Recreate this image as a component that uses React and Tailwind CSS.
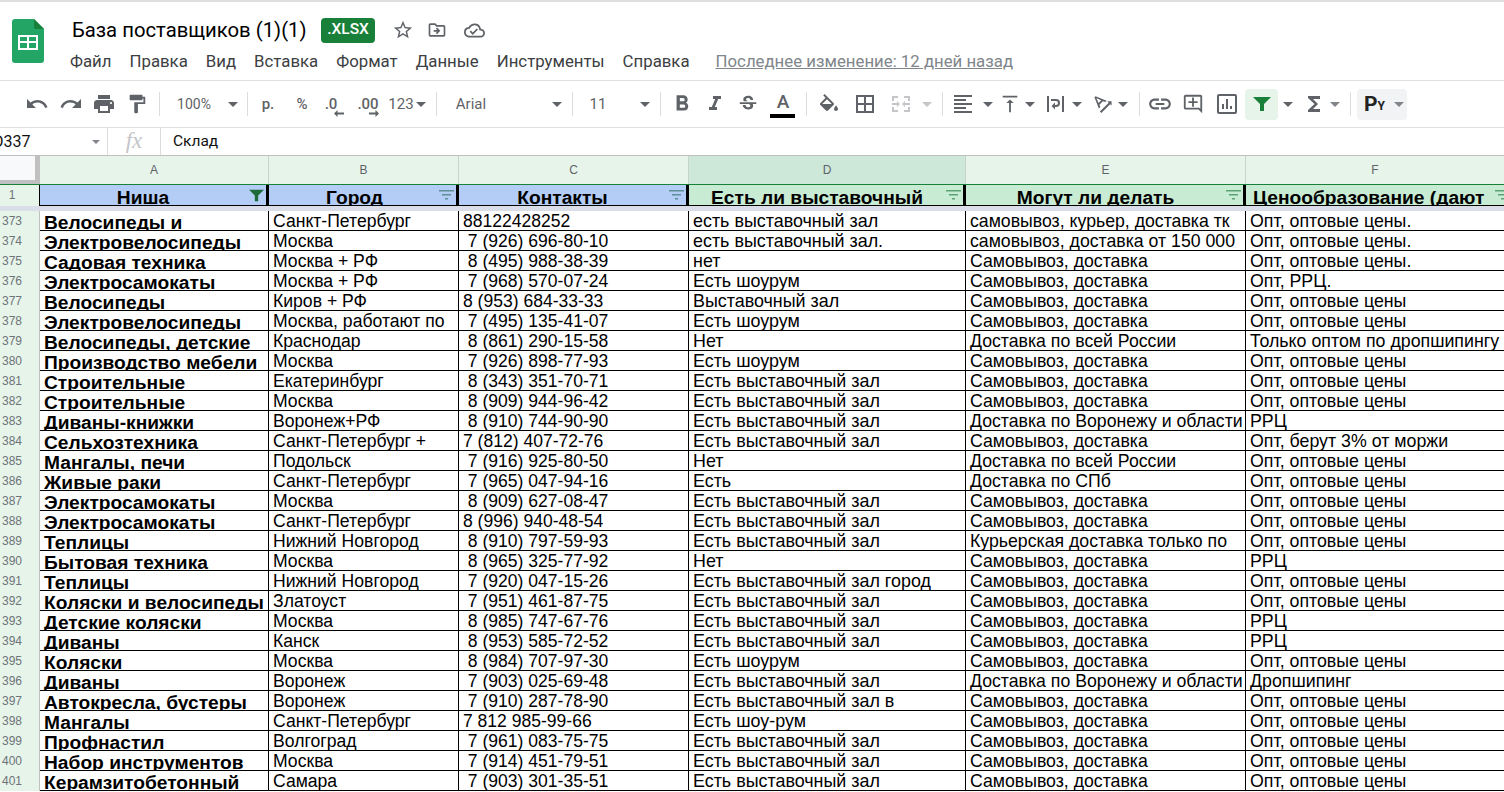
import React from 'react';
import {
  MdUndo,
  MdRedo,
  MdPrint,
  MdFormatPaint,
  MdFormatBold,
  MdFormatItalic,
  MdStrikethroughS,
  MdBorderAll,
  MdFormatAlignLeft,
  MdVerticalAlignTop,
  MdTextRotationAngleup,
  MdLink,
  MdOutlineAddComment,
  MdFunctions,
  MdStarBorder,
  MdOutlineDriveFileMove,
  MdOutlineCloudDone,
} from 'react-icons/md';

const menus = ['Файл', 'Правка', 'Вид', 'Вставка', 'Формат', 'Данные', 'Инструменты', 'Справка'];

const columns = [
  { letter: 'A', width: 'w-[229px]', title: 'Ниша', head: 'bg-[#b3cdf6]', align: 'justify-center pr-[20px]', active: true },
  { letter: 'B', width: 'w-[190px]', title: 'Город', head: 'bg-[#b3cdf6]', align: 'justify-center pr-[16px]', text: 'text-[17.600px] border-r' },
  { letter: 'C', width: 'w-[230px]', title: 'Контакты', head: 'bg-[#b3cdf6]', align: 'justify-center pr-[20px]', text: 'text-[17.550px] border-r' },
  { letter: 'D', width: 'w-[277px]', title: 'Есть ли выставочный', head: 'bg-[#c8ebd3]', align: 'justify-center pr-[18px]', selected: true, text: 'text-[17.900px] border-r' },
  { letter: 'E', width: 'w-[280px]', title: 'Могут ли делать', head: 'bg-[#c8ebd3]', align: 'justify-center pr-[18px]', text: 'text-[17.700px] border-r' },
  { letter: 'F', width: 'w-[258px]', title: 'Ценообразование (дают', head: 'bg-[#c8ebd3]', align: 'justify-start pl-[7px]', text: 'text-[17.800px]' },
];

const opt = 'Опт, оптовые цены';
const sd = 'Самовывоз, доставка';
const ez = 'Есть выставочный зал';

const rows = [
  [373, 'Велосипеды и', 'Санкт-Петербург', '88122428252', 'есть выставочный зал', 'самовывоз, курьер, доставка тк', 'Опт, оптовые цены.'],
  [374, 'Электровелосипеды', 'Москва', ' 7 (926) 696-80-10', 'есть выставочный зал.', 'самовывоз, доставка от 150 000', 'Опт, оптовые цены.'],
  [375, 'Садовая техника', 'Москва + РФ', ' 8 (495) 988-38-39', 'нет', sd, 'Опт, оптовые цены.'],
  [376, 'Электросамокаты', 'Москва + РФ', ' 7 (968) 570-07-24', 'Есть шоурум', sd, 'Опт, РРЦ.'],
  [377, 'Велосипеды', 'Киров + РФ', '8 (953) 684-33-33', 'Выставочный зал', sd, opt],
  [378, 'Электровелосипеды', 'Москва, работают по', ' 7 (495) 135-41-07', 'Есть шоурум', sd, opt],
  [379, 'Велосипеды, детские', 'Краснодар', ' 8 (861) 290-15-58', 'Нет', 'Доставка по всей России', 'Только оптом по дропшипингу'],
  [380, 'Производство мебели', 'Москва', ' 7 (926) 898-77-93', 'Есть шоурум', sd, opt],
  [381, 'Строительные', 'Екатеринбург', ' 8 (343) 351-70-71', ez, sd, opt],
  [382, 'Строительные', 'Москва', ' 8 (909) 944-96-42', ez, sd, opt],
  [383, 'Диваны-книжки', 'Воронеж+РФ', ' 8 (910) 744-90-90', ez, 'Доставка по Воронежу и области', 'РРЦ'],
  [384, 'Сельхозтехника', 'Санкт-Петербург +', '7 (812) 407-72-76', ez, sd, 'Опт, берут 3% от моржи'],
  [385, 'Мангалы, печи', 'Подольск', ' 7 (916) 925-80-50', 'Нет', 'Доставка по всей России', opt],
  [386, 'Живые раки', 'Санкт-Петербург', ' 7 (965) 047-94-16', 'Есть', 'Доставка по СПб', opt],
  [387, 'Электросамокаты', 'Москва', ' 8 (909) 627-08-47', ez, sd, opt],
  [388, 'Электросамокаты', 'Санкт-Петербург', '8 (996) 940-48-54', ez, sd, opt],
  [389, 'Теплицы', 'Нижний Новгород', ' 8 (910) 797-59-93', ez, 'Курьерская доставка только по', opt],
  [390, 'Бытовая техника', 'Москва', ' 8 (965) 325-77-92', 'Нет', sd, 'РРЦ'],
  [391, 'Теплицы', 'Нижний Новгород', ' 7 (920) 047-15-26', 'Есть выставочный зал город', sd, opt],
  [392, 'Коляски и велосипеды', 'Златоуст', ' 7 (951) 461-87-75', ez, sd, opt],
  [393, 'Детские коляски', 'Москва', ' 8 (985) 747-67-76', ez, sd, 'РРЦ'],
  [394, 'Диваны', 'Канск', ' 8 (953) 585-72-52', ez, sd, 'РРЦ'],
  [395, 'Коляски', 'Москва', ' 8 (984) 707-97-30', 'Есть шоурум', sd, opt],
  [396, 'Диваны', 'Воронеж', ' 7 (903) 025-69-48', ez, 'Доставка по Воронежу и области', 'Дропшипинг'],
  [397, 'Автокресла, бустеры', 'Воронеж', ' 7 (910) 287-78-90', 'Есть выставочный зал в', sd, opt],
  [398, 'Мангалы', 'Санкт-Петербург', '7 812 985-99-66', 'Есть шоу-рум', sd, opt],
  [399, 'Профнастил', 'Волгоград', ' 7 (961) 083-75-75', ez, sd, opt],
  [400, 'Набор инструментов', 'Москва', ' 7 (914) 451-79-51', ez, sd, opt],
  [401, 'Керамзитобетонный', 'Самара', ' 7 (903) 301-35-51', ez, sd, opt],
];

const Caret = ({ className = 'border-t-[#5f6368]' }) => (
  <span className={`block w-0 h-0 border-x-[5px] border-x-transparent border-t-[5px] ${className}`} />
);

// one toolbar slot, the width keeps the glyph on its spot
const Slot = ({ className = '', children }) => (
  <div className={`h-[24px] flex items-center justify-center shrink-0 text-[#5f6368] ${className}`}>{children}</div>
);

const Sep = ({ className = '' }) => <div className={`w-px h-[24px] bg-[#dadce0] shrink-0 ${className}`} />;

const SheetsLogo = () => (
  <svg width="32" height="44" viewBox="0 0 32 44" className="shrink-0">
    <path d="M3 0h19l10 10v31a3 3 0 0 1-3 3H3a3 3 0 0 1-3-3V3a3 3 0 0 1 3-3z" fill="#23a566" />
    <path d="M22 0l10 10h-8a2 2 0 0 1-2-2z" fill="#188038" />
    <path d="M6 16h20v15H6zm2 2v4h7v-4zm9 0v4h7v-4zm-9 6v5h7v-5zm9 0v5h7v-5z" fill="#fff" fillRule="evenodd" />
  </svg>
);

const MergeIcon = () => (
  <svg width="20" height="20" viewBox="0 0 20 20" fill="#c4c6c9">
    <path d="M1 2h6v2H3v3H1zm12 0h6v5h-2V4h-4zM1 13h2v3h4v2H1zm16 0h2v5h-6v-2h4zM1 9h5V7l3 3-3 3v-2H1zm18 0h-5V7l-3 3 3 3v-2h5z" />
  </svg>
);

const WrapIcon = () => (
  <svg width="20" height="20" viewBox="0 0 20 20" fill="#5f6368">
    <path d="M1 2h2v16H1zm15 0h2v16h-2z" />
    <path d="M5 5h5a3 3 0 0 1 0 8H9v2.500L5.500 12 9 8.500V11h1a1 1 0 0 0 0-4H5z" />
  </svg>
);

const FillIcon = () => (
  <svg width="24" height="24" viewBox="0 0 24 20" fill="#5f6368">
    <path d="M16.56 8.94L7.62 0 6.21 1.41l2.38 2.38-5.15 5.15c-.59.59-.59 1.54 0 2.12l5.5 5.5c.29.29.68.44 1.06.44s.77-.15 1.06-.44l5.5-5.5c.59-.58.59-1.53 0-2.12zM5.21 10L10 5.21 14.79 10H5.21zM19 11.5s-2 2.17-2 3.5c0 1.1.9 2 2 2s2-.9 2-2c0-1.33-2-3.5-2-3.5z" />
  </svg>
);

const ChartIcon = () => (
  <svg width="20" height="20" viewBox="0 0 20 20" fill="#5f6368">
    <path d="M2 0h16a2 2 0 0 1 2 2v16a2 2 0 0 1-2 2H2a2 2 0 0 1-2-2V2a2 2 0 0 1 2-2zm0 2v16h16V2z" fillRule="evenodd" />
    <path d="M5 10h2v5H5zm4-5h2v10H9zm4 7h2v3h-2z" />
  </svg>
);

const Funnel = ({ size = 18, color = '#188038' }) => (
  <svg width={size} height={size} viewBox="0 0 18 18" fill={color}>
    <path d="M0 2h18l-7 7v7H7V9z" />
  </svg>
);

const FilterLines = ({ color }) => (
  <svg width="15" height="10" viewBox="0 0 15 10" fill={color}>
    <path d="M0 0h15v1.500H0zM3 4h9v1.500H3zM6 8h3v1.500H6z" />
  </svg>
);

const ArrowSmall = ({ flip }) => (
  <svg width="10" height="7" viewBox="0 0 10 7" fill="#5f6368" className={flip ? 'rotate-180' : ''}>
    <path d="M10 2.500H3.500V0L0 3.500 3.500 7V4.500H10z" />
  </svg>
);

const Toolbar = () => (
  <div className="h-[47px] flex items-center pl-[20px] border-b border-[#e0e0e0] font-['Roboto',sans-serif] text-[15px]">
    <Slot className="w-[34px]"><MdUndo size={24} /></Slot>
    <Slot className="w-[34px]"><MdRedo size={24} /></Slot>
    <Slot className="w-[32px]"><MdPrint size={24} /></Slot>
    <Slot className="w-[34px]"><MdFormatPaint size={22} /></Slot>
    <Sep className="ml-[5px]" />
    <Slot className="w-[68px] text-[14px]">100%</Slot>
    <Slot className="w-[10px]"><Caret /></Slot>
    <Sep className="ml-[9px]" />
    <Slot className="w-[40px] font-medium">р.</Slot>
    <Slot className="w-[28px] font-medium">%</Slot>
    <Slot className="w-[30px]">
      <span className="relative font-medium">.0<span className="absolute left-[9px] top-[17px] leading-none"><ArrowSmall /></span></span>
    </Slot>
    <Slot className="w-[44px]">
      <span className="relative font-medium">.00<span className="absolute left-[12px] top-[17px] leading-none"><ArrowSmall flip /></span></span>
    </Slot>
    <Slot className="w-[22px]">123</Slot>
    <Slot className="w-[18px]"><Caret /></Slot>
    <Sep className="ml-[6px]" />
    <Slot className="w-[68px]">Arial</Slot>
    <Slot className="w-[10px] ml-[47px]"><Caret /></Slot>
    <Sep className="ml-[10px]" />
    <Slot className="w-[50px]">11</Slot>
    <Slot className="w-[10px] ml-[17px]"><Caret /></Slot>
    <Sep className="ml-[10px]" />
    <Slot className="w-[42px]"><MdFormatBold size={26} /></Slot>
    <Slot className="w-[24px]"><MdFormatItalic size={24} /></Slot>
    <Slot className="w-[42px]"><MdStrikethroughS size={22} /></Slot>
    <Slot className="w-[28px] relative">
      <span className="text-[19px] font-medium leading-none pb-[5px]">A</span>
      <span className="absolute left-[1px] bottom-[-2px] w-[25px] h-[4px] bg-black" />
    </Slot>
    <Sep className="ml-[9px]" />
    <Slot className="w-[44px]"><FillIcon /></Slot>
    <Slot className="w-[28px]"><MdBorderAll size={24} /></Slot>
    <Slot className="w-[44px]"><MergeIcon /></Slot>
    <Slot className="w-[8px]"><Caret className="border-t-[#c4c6c9]" /></Slot>
    <Sep className="ml-[11px]" />
    <Slot className="w-[40px]"><MdFormatAlignLeft size={24} /></Slot>
    <Slot className="w-[10px]"><Caret /></Slot>
    <Slot className="w-[34px]"><MdVerticalAlignTop size={22} /></Slot>
    <Slot className="w-[6px]"><Caret /></Slot>
    <Slot className="w-[34px] ml-[6px]"><WrapIcon /></Slot>
    <Slot className="w-[8px]"><Caret /></Slot>
    <Slot className="w-[28px] ml-[8px]"><MdTextRotationAngleup size={24} /></Slot>
    <Slot className="w-[12px]"><Caret /></Slot>
    <Sep className="ml-[10px]" />
    <Slot className="w-[40px]"><MdLink size={26} /></Slot>
    <Slot className="w-[26px]"><MdOutlineAddComment size={22} /></Slot>
    <Slot className="w-[36px] ml-[3px]"><ChartIcon /></Slot>
    <div className="w-[33px] h-[31px] rounded-sm bg-[#e6f4ea] flex items-center justify-center shrink-0"><Funnel size={18} /></div>
    <Slot className="w-[20px]"><Caret /></Slot>
    <Slot className="w-[32px]"><MdFunctions size={24} /></Slot>
    <Slot className="w-[10px]"><Caret className="border-t-[#80868b]" /></Slot>
    <Sep className="ml-[10px]" />
    <div className="w-[50px] h-[31px] ml-[6px] rounded-sm bg-[#f1f3f4] flex items-center pl-[7px] shrink-0 text-[#222] font-bold">
      <span className="text-[21px] leading-none">Р</span>
      <span className="text-[12px] leading-none mt-[4px]">Y</span>
      <span className="ml-[9px]"><Caret className="border-t-[#80868b]" /></span>
    </div>
  </div>
);

const Formula = () => (
  <div className="h-[28px] flex items-center border-b border-[#c0c0c0] font-['Roboto',sans-serif] text-[15px] text-[#111]">
    <div className="w-[108px] h-full flex items-center justify-between pr-[7px] border-r border-[#dadce0] overflow-hidden">
      <span className="ml-[-7px] text-[16px]">D337</span>
      <span className="block w-0 h-0 border-x-[4px] border-x-transparent border-t-[4px] border-t-[#80868b]" />
    </div>
    <div className="w-[53px] h-full flex items-center justify-center border-r border-[#dadce0] font-['Liberation_Serif',serif] italic text-[23px] text-[#c4c6c9]">fx</div>
    <div className="pl-[12px] text-[15.500px]">Склад</div>
  </div>
);

const ColumnHeaders = () => (
  <div className="h-[29px] flex border-b border-[#188038] font-['Liberation_Sans',sans-serif] text-[12px] text-[#5f6368]">
    <div className="w-[40px] h-[28px] bg-[#f8f9fa] shrink-0 border-r-[5px] border-b-[4px] border-[#c0c0c0]" />
    {columns.map(col => (
      <div
        key={col.letter}
        className={`${col.width} shrink-0 flex items-center justify-center ${col.letter === 'F' ? '' : 'border-r border-[#c7d3cb]'} ${col.selected ? 'bg-[#cde8d8]' : 'bg-[#e6f4ea]'}`}
      >
        {col.letter}
      </div>
    ))}
  </div>
);

const HeaderRow = () => (
  <div className="h-[21px] flex font-['Liberation_Sans',sans-serif]">
    <div className="w-[40px] shrink-0 bg-[#e6f4ea] border-r border-black text-[12px] text-[#6f7378]">
      <div className="w-[24px] h-[20px] flex items-center justify-center">1</div>
    </div>
    {columns.map(col => (
      <div
        key={col.letter}
        className={`${col.width} ${col.head} ${col.align} ${col.letter === 'F' ? '' : 'border-r-[3px] border-r-black'} relative shrink-0 flex items-end overflow-hidden border-b border-b-black text-[19.200px] leading-[15px] font-bold text-black whitespace-nowrap`}
      >
        {col.title}
        <span className={`absolute flex items-center justify-center ${col.active ? 'top-[3px]' : 'top-[5px]'} ${col.letter === 'F' ? 'right-[-6px]' : 'right-[2px]'}`}>
          {col.active ? <Funnel size={15} color="#1e6b3a" /> : <FilterLines color={col.head === 'bg-[#b3cdf6]' ? '#5e8f96' : '#5aa472'} />}
        </span>
      </div>
    ))}
  </div>
);

const DataRow = ({ row }) => {
  const [num, a, ...rest] = row;
  return (
    <div className="h-[20px] flex font-['Liberation_Sans',sans-serif] text-black">
      <div className="w-[40px] shrink-0 bg-[#e6f4ea] border-r border-[#c0c0c0] text-[12px] text-[#6f7378]">
        <div className="w-[24px] h-[19px] flex items-center justify-center">{num}</div>
      </div>
      <div className={`${columns[0].width} shrink-0 h-[20px] flex items-end overflow-hidden border-r border-b border-black pl-[4px] text-[19.200px] leading-[15px] font-bold whitespace-nowrap`}>
        {a}
      </div>
      {rest.map((text, i) => (
        <div
          key={columns[i + 1].letter}
          className={`${columns[i + 1].width} ${columns[i + 1].text} shrink-0 h-[20px] flex items-end overflow-hidden border-b border-black pl-[4px] leading-[18px] whitespace-pre`}
        >
          {text}
        </div>
      ))}
    </div>
  );
};

export default function App() {
  return (
    <div className="w-[1504px] h-[792px] overflow-hidden bg-white">
      <div className="h-[81px] flex border-t-2 border-b border-[#e0e0e0] pl-[12px] font-['Roboto',sans-serif]">
        <div className="pt-[17px]"><SheetsLogo /></div>
        <div className="ml-[26px] pt-[15px]">
          <div className="flex items-center h-[26px]">
            <span className="ml-[2px] w-[234px] text-[20.300px] text-black whitespace-nowrap">База поставщиков (1)(1)</span>
            <span className="ml-[15px] w-[54px] h-[25px] rounded bg-[#188038] flex items-center justify-center text-white text-[15.500px] font-medium">.XLSX</span>
            <span className="flex items-center text-[#5f6368]">
              <MdStarBorder size={22} className="ml-[17px]" />
              <MdOutlineDriveFileMove size={20} className="ml-[13px]" />
              <MdOutlineCloudDone size={21} className="ml-[17px]" />
            </span>
          </div>
          <div className="flex items-center gap-[18px] mt-[6px] text-[16.800px] text-[#3c4043] whitespace-nowrap">
            {menus.map(m => <span key={m}>{m}</span>)}
            <span className="ml-[8px] text-[#80868b] underline">Последнее изменение: 12 дней назад</span>
          </div>
        </div>
      </div>
      <Toolbar />
      <Formula />
      <ColumnHeaders />
      <HeaderRow />
      <div className="h-[5px] bg-[#d9dee8]" />
      {rows.map(row => <DataRow key={row[0]} row={row} />)}
    </div>
  );
}
